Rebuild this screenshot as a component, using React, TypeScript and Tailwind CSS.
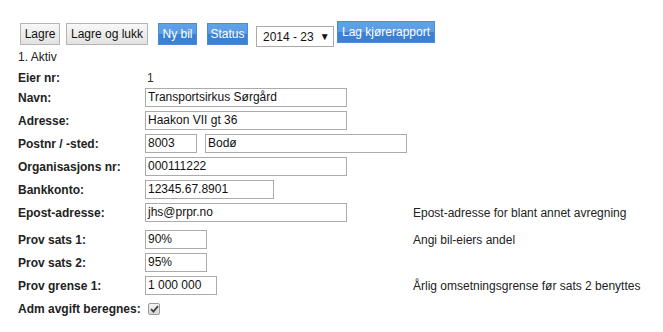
import type { ReactNode } from "react";

function GrayButton({ children, width }: { children: ReactNode; width: string }) {
  return (
    <button
      className={`mt-[2px] h-[22px] border border-[#b4b4b4] bg-gradient-to-b from-[#f8f8f8] to-[#e2e2e2] text-center text-[12px] leading-[20px] text-[#111] ${width}`}
    >
      {children}
    </button>
  );
}

function BlueButton({ children, className = "" }: { children: ReactNode; className?: string }) {
  return (
    <button
      className={`h-[22px] whitespace-nowrap border border-[#4a8cd6] bg-[linear-gradient(#5fa2e8_0%,#5a9de5_50%,#3a80d2_52%,#3b82d4_100%)] text-center text-[12px] leading-[20px] text-white ${className}`}
    >
      {children}
    </button>
  );
}

function Field({ width, value }: { width: string; value: string }) {
  return (
    <div
      className={`h-[19px] border border-[#ababab] bg-white pl-[2px] text-[12px] leading-[17px] text-[#111] ${width}`}
    >
      {value}
    </div>
  );
}

function Row({
  label,
  children,
  note,
  className = "",
}: {
  label: string;
  children?: ReactNode;
  note?: string;
  className?: string;
}) {
  return (
    <div className={`flex h-[23px] items-center ${className}`}>
      <div className="w-[127px] shrink-0 font-bold text-[#222]">{label}</div>
      <div className="flex w-[268px] shrink-0 items-center gap-[8px]">{children}</div>
      {note && <div className="text-[#222]">{note}</div>}
    </div>
  );
}

export default function App() {
  return (
    <div className="h-[332px] w-[663px] overflow-hidden bg-white font-['Liberation_Sans',Arial,sans-serif] text-[12px] leading-[14px]">
      {/* Toolbar */}
      <div className="flex items-start pl-[20px] pt-[21px]">
        <GrayButton width="w-[40px]">Lagre</GrayButton>
        <div className="w-[6px]" />
        <GrayButton width="w-[82px]">Lagre og lukk</GrayButton>
        <div className="w-[10px]" />
        <BlueButton className="mt-[2px] w-[39px]">Ny bil</BlueButton>
        <div className="w-[10px]" />
        <BlueButton className="mt-[2px] w-[41px]">Status</BlueButton>
        <div className="w-[8px]" />
        <div className="mt-[5px] flex h-[21px] w-[78px] items-center border border-[#a9a9a9] bg-white pl-[6px] text-[12px] text-[#111]">
          <span>2014 - 23</span>
          <span className="ml-[6px] text-[10px] text-[#111]">▼</span>
        </div>
        <div className="w-[3px]" />
        <BlueButton className="w-[98px]">Lag kjørerapport</BlueButton>
      </div>

      <div className="pl-[18px]">
        <div className="mt-[3px] text-[#222]">1. Aktiv</div>

        <div className="mt-[5px] flex h-[17px] items-center">
          <div className="w-[127px] font-bold text-[#222]">Eier nr:</div>
          <div className="pl-[2px] text-[#333]">1</div>
        </div>

        <Row label="Navn:">
          <Field width="w-[202px]" value="Transportsirkus Sørgård" />
        </Row>
        <Row label="Adresse:">
          <Field width="w-[202px]" value="Haakon VII gt 36" />
        </Row>
        <Row label="Postnr / -sted:">
          <Field width="w-[52px]" value="8003" />
          <Field width="w-[202px]" value="Bodø" />
        </Row>
        <Row label="Organisasjons nr:">
          <Field width="w-[202px]" value="000111222" />
        </Row>
        <Row label="Bankkonto:">
          <Field width="w-[129px]" value="12345.67.8901" />
        </Row>
        <Row label="Epost-adresse:" note="Epost-adresse for blant annet avregning" className="mb-[4px]">
          <Field width="w-[202px]" value="jhs@prpr.no" />
        </Row>
        <Row label="Prov sats 1:" note="Angi bil-eiers andel">
          <Field width="w-[62px]" value="90%" />
        </Row>
        <Row label="Prov sats 2:">
          <Field width="w-[62px]" value="95%" />
        </Row>
        <Row label="Prov grense 1:" note="Årlig omsetningsgrense før sats 2 benyttes">
          <Field width="w-[72px]" value="1 000 000" />
        </Row>
        <div className="flex h-[23px] items-center">
          <div className="w-[130px] shrink-0 font-bold text-[#222]">Adm avgift beregnes:</div>
          <div className="flex h-[12px] w-[12px] items-center justify-center rounded-[2px] border border-[#9a9a9a] bg-gradient-to-b from-[#f4f4f4] to-[#d8d8d8]">
            <svg width="9" height="8" viewBox="0 0 9 8">
              <path d="M1 4.2 L3.4 6.6 L8 1.2" fill="none" stroke="#444" strokeWidth="1.8" />
            </svg>
          </div>
        </div>
      </div>
    </div>
  );
}
